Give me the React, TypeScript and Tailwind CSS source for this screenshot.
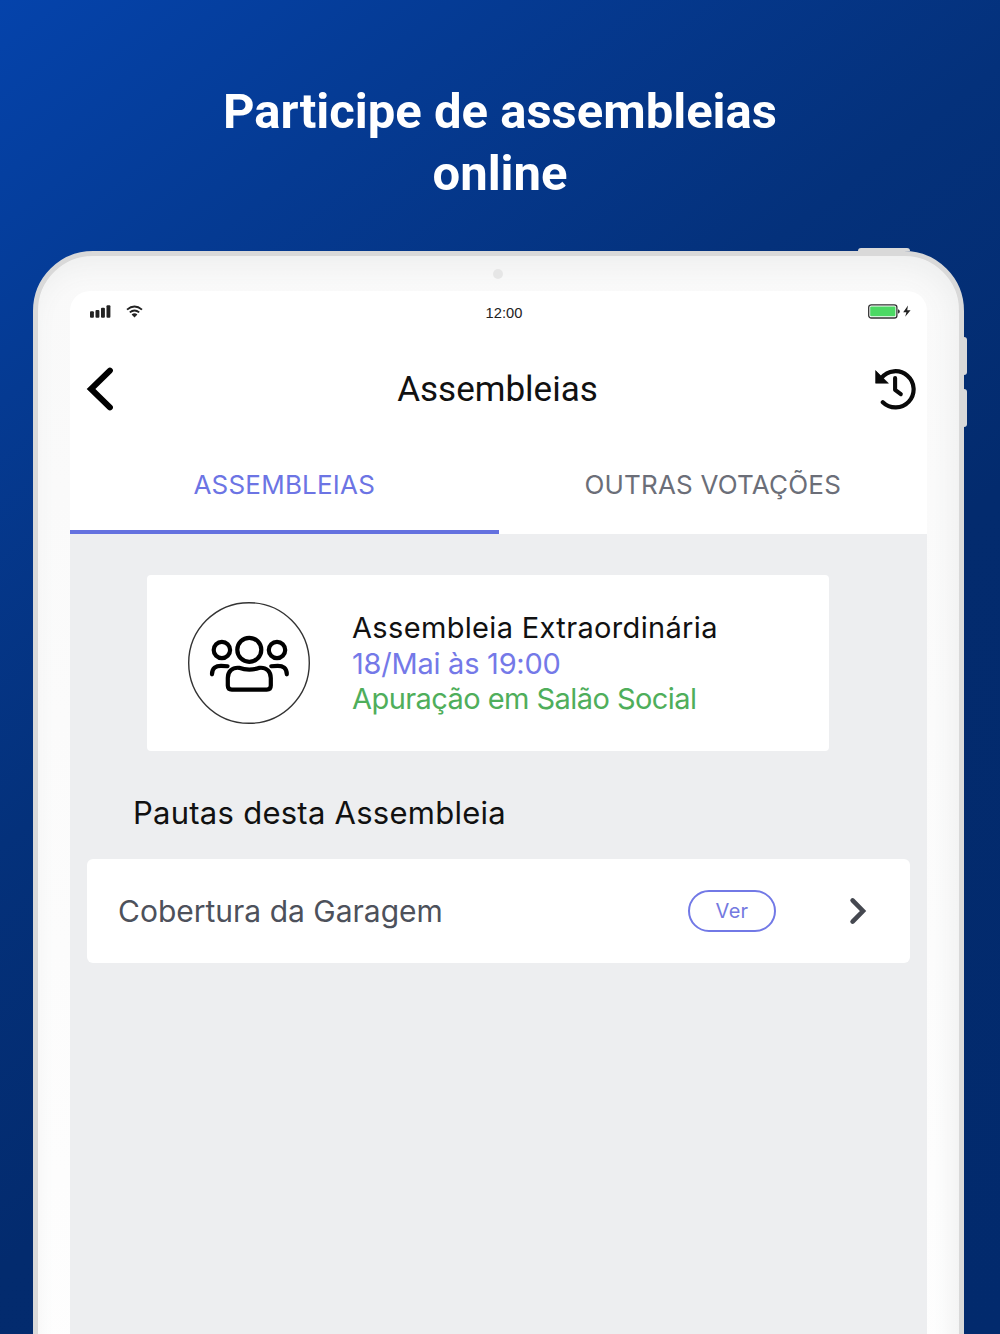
import clsx from "clsx";

const tabs = [
  { title: "ASSEMBLEIAS", active: true },
  { title: "OUTRAS VOTAÇÕES", active: false },
];

const pautas = [{ title: "Cobertura da Garagem", action: "Ver" }];

function SignalIcon() {
  return (
    <svg width="21" height="13" viewBox="0 0 21 13" fill="#222">
      <rect x="0" y="6.3" width="3.9" height="6.4" rx="1" />
      <rect x="5.5" y="5" width="3.9" height="7.7" rx="1" />
      <rect x="11" y="2.8" width="3.9" height="9.9" rx="1" />
      <rect x="16.5" y="0.2" width="3.9" height="12.5" rx="1" />
    </svg>
  );
}

function WifiIcon() {
  return (
    <svg width="17" height="13" viewBox="0 0 17 13" fill="none">
      <path d="M1 4.6 Q8.5 -1.8 16 4.6" stroke="#222" strokeWidth="1.9" />
      <path d="M3.8 7.4 Q8.5 3.4 13.2 7.4" stroke="#222" strokeWidth="1.9" />
      <path d="M5.6 9.4 Q8.5 7.3 11.4 9.4 L8.5 12.4 Z" fill="#222" />
    </svg>
  );
}

function BatteryIcon() {
  return (
    <svg width="44" height="15" viewBox="0 0 44 15" fill="none">
      <rect x="0.7" y="0.8" width="28.2" height="13.2" rx="2.6" stroke="#333" strokeWidth="1.3" />
      <rect x="2.2" y="2.6" width="25.2" height="9.6" rx="1" fill="#4cd964" />
      <path d="M30 5.2 Q31.8 5.7 31.8 7.4 Q31.8 9.1 30 9.6 Z" fill="#333" />
      <path d="M40 1.6 L35.2 8.3 H38.4 L37.2 12.8 L42.6 6.3 H39.2 Z" fill="#222" />
    </svg>
  );
}

function BackIcon() {
  return (
    <svg width="28" height="44" viewBox="0 0 28 44" fill="none">
      <path d="M23.9 3.6 L5 22 L23.9 40.4" stroke="#000" strokeWidth="6" strokeLinecap="round" />
    </svg>
  );
}

function HistoryIcon() {
  return (
    <svg width="42" height="42" viewBox="0 0 42 42" fill="none">
      <path
        d="M8.8 34.2 A18.1 18.1 0 1 0 7.4 10"
        stroke="#0a0a0a"
        strokeWidth="4.2"
        strokeLinecap="round"
      />
      <path d="M1.6 2.6 L14.4 15.2 H1.6 Z" fill="#0a0a0a" stroke="#0a0a0a" strokeWidth="0.6" />
      <path
        d="M21.1 10 V21.8 L26.8 26.2"
        stroke="#0a0a0a"
        strokeWidth="4.1"
        strokeLinecap="round"
        strokeLinejoin="round"
      />
    </svg>
  );
}

function PeopleIcon() {
  return (
    <svg width="122" height="122" viewBox="0 0 122 122" fill="none" stroke="#000" strokeLinecap="round">
      <circle cx="61" cy="61" r="60.3" stroke="#333" strokeWidth="1.4" />
      <g strokeWidth="4.2">
        <circle cx="61.3" cy="47.8" r="12" />
        <circle cx="33.9" cy="48" r="8.2" />
        <circle cx="89" cy="48" r="8.2" />
        <path d="M24 72.3 C24 66 28 63.8 33 63.8 C36 63.8 37.5 63.8 39.5 64.2" />
        <path d="M98.8 72.3 C98.8 66 94.8 63.8 89.8 63.8 C86.8 63.8 85.3 63.8 83.3 64.2" />
        <path d="M51 65.8 C58 68.2 64.6 68.2 71.6 65.8 C78.5 65.2 82.8 69.5 82.8 76 V83.5 Q82.8 87.6 78.8 87.6 H43.8 Q39.8 87.6 39.8 83.5 V76 C39.8 69.5 44.1 65.2 51 65.8 Z" />
      </g>
    </svg>
  );
}

function ChevronIcon() {
  return (
    <svg width="20" height="28" viewBox="0 0 20 28" fill="none">
      <path d="M4.6 3.4 L15 14 L4.6 24.6" stroke="#454850" strokeWidth="4.6" strokeLinecap="round" />
    </svg>
  );
}

function StatusBar() {
  return (
    <div className="grid h-11 grid-cols-3 items-center pr-[15px] pl-5">
      <div className="flex items-center gap-[15px] pb-[3px]">
        <SignalIcon />
        <WifiIcon />
      </div>
      <span className="pl-[6px] text-center font-['Liberation_Sans',sans-serif] text-[14.7px] text-[#222]">
        12:00
      </span>
      <div className="flex justify-end pb-[3px]">
        <BatteryIcon />
      </div>
    </div>
  );
}

function Tabs() {
  return (
    <div className="grid h-[91px] grid-cols-2 text-[26px] tracking-[0.2px]">
      {tabs.map((tab) => (
        <div
          key={tab.title}
          className={clsx(
            "flex items-center justify-center border-b-4 pb-[5px]",
            tab.active
              ? "border-[#6471df] text-[#6c74e4]"
              : "border-transparent text-[#6b6e78]"
          )}
        >
          {tab.title}
        </div>
      ))}
    </div>
  );
}

function App() {
  return (
    <div className="flex h-[1334px] w-[1000px] flex-col overflow-hidden bg-[linear-gradient(142deg,#0543ab_0%,#053a92_19%,#04317b_40%,#032b6e_60%,#022a6d_100%)] font-[Inter,sans-serif]">
      <h1 className="h-[251px] shrink-0 pt-[81px] text-center font-[Roboto,sans-serif] text-[49px] leading-[62px] font-bold text-white">
        Participe de assembleias
        <br />
        online
      </h1>
      <div className="relative ml-[33px] h-[1160px] w-[931px] shrink-0 rounded-[60px] border-[5px] border-[#d9d9d9] bg-linear-to-b from-[#f9f9f9] to-[#fefefe] px-8 shadow-[inset_-5px_10px_24px_#eeefef]">
        {/* hardware buttons */}
        <div className="absolute -top-2 left-[820px] h-[3px] w-[52px] rounded-t-sm bg-[#d9d9d9]" />
        <div className="absolute top-[81px] -right-2 h-[38px] w-[3px] rounded-r-sm bg-[#d9d9d9]" />
        <div className="absolute top-[133px] -right-2 h-[38px] w-[3px] rounded-r-sm bg-[#d9d9d9]" />
        <div className="flex h-[35px] justify-center pt-[13px] pr-px">
          <div className="size-[10px] rounded-full bg-[#e6e6e6]" />
        </div>
        <div className="flex h-[1100px] flex-col overflow-hidden rounded-t-[20px] bg-white">
          <StatusBar />
          <div className="flex h-[108px] shrink-0 items-center justify-between pr-[11px] pl-4">
            <BackIcon />
            <h2 className="pt-[2px] pl-[7px] font-[Roboto,sans-serif] text-[35px] text-[#111]">
              Assembleias
            </h2>
            <HistoryIcon />
          </div>
          <Tabs />
          <div className="flex-1 bg-[#edeef0] pt-[41px]">
            <div className="ml-[77px] flex h-44 w-[682px] items-center gap-[42px] rounded bg-white pl-[41px]">
              <PeopleIcon />
              <div className="text-[29px] leading-[35.6px]">
                <p className="tracking-[0.34px] text-[#111]">Assembleia Extraordinária</p>
                <p className="pt-px tracking-[-0.25px] text-[#7479e8]">18/Mai às 19:00</p>
                <p className="-mt-px tracking-[-0.56px] text-[#4fae5b]">Apuração em Salão Social</p>
              </div>
            </div>
            <h3 className="mt-[41px] ml-[63px] text-[31px] leading-[42px] tracking-[0.26px] text-[#111]">
              Pautas desta Assembleia
            </h3>
            {pautas.map((pauta) => (
              <div
                key={pauta.title}
                className="mt-[25px] ml-[17px] flex h-[104px] w-[823px] items-center rounded-md bg-white pr-[42px] pl-[31px]"
              >
                <span className="flex-1 text-[30px] text-[#4d515b]">{pauta.title}</span>
                <button className="h-[42px] w-[88px] rounded-full border-2 border-[#7279e6] text-xl tracking-[0.3px] text-[#7479e0]">
                  {pauta.action}
                </button>
                <div className="ml-[72px]">
                  <ChevronIcon />
                </div>
              </div>
            ))}
          </div>
        </div>
      </div>
    </div>
  );
}

export default App;
